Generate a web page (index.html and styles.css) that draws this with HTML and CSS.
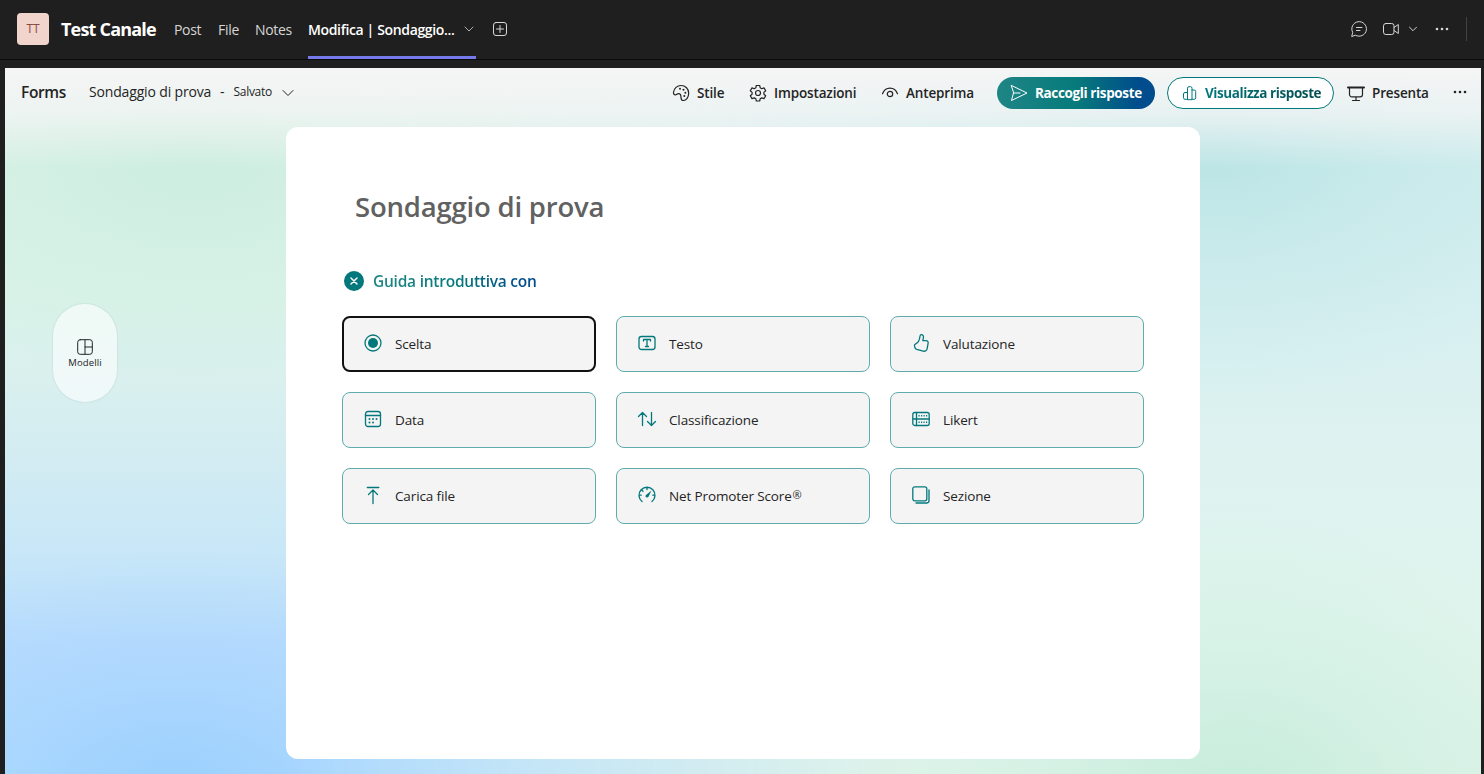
FILE: index.html
```html
<!DOCTYPE html>
<html lang="it">
<head>
    <meta charset="UTF-8">
    <meta name="viewport" content="width=device-width, initial-scale=1.0">
    <title>Test Canale</title>
    <link rel="stylesheet" href="styles.css">
</head>
<body>
    <header class="topbar">
        <div class="avatar">TT</div>
        <h1 class="channel">Test Canale</h1>
        <nav class="tabs">
            <a class="tab post">Post</a>
            <a class="tab file">File</a>
            <a class="tab notes">Notes</a>
            <a class="tab active">
                <span>Modifica | Sondaggio...</span>
                <svg width="10" height="10" viewBox="0 0 10 10"><path d="M1 3l4 4 4-4"/></svg>
            </a>
        </nav>
        <svg class="add" width="16" height="16" viewBox="0 0 16 16"><rect x="1.5" y="1.5" width="13" height="13" rx="2.5"/><path d="M8 4.500v7M4.500 8h7"/></svg>
        <div class="top-actions">
            <svg class="chat" width="18" height="18" viewBox="0 0 18 18"><path d="M1.800 16.200l.9-3.800A7.300 7.300 0 1 1 5.700 15.400zM6.500 7.500h5.500M6.500 10.500h3.500"/></svg>
            <svg class="video" width="18" height="16" viewBox="0 0 18 16"><rect x="1.500" y="2.500" width="10.500" height="11" rx="2.300"/><path d="M12 6.500l4.300-3v9l-4.300-3"/></svg>
            <svg class="video-menu" width="10" height="10" viewBox="0 0 10 10"><path d="M1.500 3.200l3.500 3.500 3.500-3.500"/></svg>
            <svg class="dots" width="14" height="4" viewBox="0 0 14 4"><circle cx="2" cy="2" r="1.300"/><circle cx="7" cy="2" r="1.300"/><circle cx="12" cy="2" r="1.300"/></svg>
            <span class="divider"></span>
        </div>
    </header>

    <main class="page">
        <div class="forms-bar">
            <span class="brand">Forms</span>
            <span class="doc-name">Sondaggio di prova</span>
            <span class="dash">-</span>
            <span class="saved">Salvato</span>
            <svg class="saved-menu" width="12" height="12" viewBox="0 0 12 12"><path d="M1 3.500l5 5 5-5"/></svg>
            <div class="commands">
                <a class="command style">
                    <svg width="18" height="18" viewBox="0 0 18 18"><path d="M1.500 8.200C2 4.200 5.200 1.500 9 1.500c4.500 0 7.700 3.400 7.700 7.600 0 4-2.400 7.400-5.200 7.400-1.800 0-2.500-1.300-2.500-3.100 0-2.300-.7-3.800-2.500-3.800-1.600 0-1.700 1.300-3.200 1.300-1.200 0-2-1.100-1.800-2.700z"/><g class="fill"><circle cx="8" cy="4.700" r="1"/><circle cx="11.500" cy="5.800" r="1"/><circle cx="13.400" cy="8.700" r="1"/><circle cx="12.300" cy="12" r="1"/></g></svg>
                    <span>Stile</span>
                </a>
                <a class="command settings">
                    <svg width="18" height="18" viewBox="0 0 18 18"><path d="M7.300 1.500h3.400l.5 2.300 1.500.9 2.300-.8 1.700 2.900-1.800 1.600v1.800l1.800 1.500-1.700 2.900-2.300-.7-1.500.8-.5 2.300H7.300l-.5-2.300-1.500-.8-2.300.7-1.700-2.900 1.800-1.500V8.400L1.300 6.800 3 3.900l2.300.8 1.500-.9z"/><circle cx="9" cy="9" r="2.500"/></svg>
                    <span>Impostazioni</span>
                </a>
                <a class="command preview">
                    <svg width="18" height="18" viewBox="0 0 18 18"><path d="M1.500 9.800C2.800 6.200 5.600 4.100 9 4.100s6.200 2.100 7.500 5.700"/><circle cx="9" cy="10" r="2.700"/></svg>
                    <span>Anteprima</span>
                </a>
                <button class="btn collect">
                    <svg width="18" height="18" viewBox="0 0 18 18"><path d="M1.500 1.500L17 9 1.500 16.500 3.500 9zM3.500 9H10"/></svg>
                    <span>Raccogli risposte</span>
                </button>
                <button class="btn results">
                    <svg width="16" height="16" viewBox="0 0 16 16"><path d="M5.500 14.300V3.200a1.500 1.500 0 0 1 1.500-1.500h1.500A1.500 1.500 0 0 1 10 3.200v11.100zM5.500 7.500H3A1.500 1.500 0 0 0 1.500 9v3.800A1.500 1.500 0 0 0 3 14.300h2.500M10 5h2.200a1.500 1.500 0 0 1 1.500 1.500v6.300a1.500 1.500 0 0 1-1.500 1.500H10"/></svg>
                    <span>Visualizza risposte</span>
                </button>
                <a class="command present">
                    <svg width="18" height="18" viewBox="0 0 18 18"><path class="thick" d="M1 2.500h16"/><path d="M2.500 3v6.500a2.300 2.300 0 0 0 2.300 2.300h8.400a2.300 2.300 0 0 0 2.300-2.300V3M9 12v3.500M5.500 15.500h7"/></svg>
                    <span>Presenta</span>
                </a>
                <svg class="dots more" width="14" height="4" viewBox="0 0 14 4"><circle cx="2" cy="2" r="1.300"/><circle cx="7" cy="2" r="1.300"/><circle cx="12" cy="2" r="1.300"/></svg>
            </div>
        </div>

        <div class="workspace">
            <a class="templates">
                <svg width="16" height="16" viewBox="0 0 16 16"><rect x=".7" y=".7" width="14.600" height="14.600" rx="2.500"/><path d="M8 1v14M8 8h7"/></svg>
                <span>Modelli</span>
            </a>
            <section class="form-card">
                <h2 class="title">Sondaggio di prova</h2>
                <div class="guide">
                    <svg width="20" height="20" viewBox="0 0 20 20"><circle cx="10" cy="10" r="10"/><path d="M7 7l6 6M13 7l-6 6"/></svg>
                    <span>Guida introduttiva con</span>
                </div>
                <div class="types">
                    <button class="type selected">
                        <svg width="20" height="20" viewBox="0 0 20 20"><circle cx="10" cy="10" r="8"/><circle class="fill" cx="10" cy="10" r="5"/></svg>
                        <span>Scelta</span>
                    </button>
                    <button class="type">
                        <svg width="20" height="20" viewBox="0 0 20 20"><rect x="2" y="3.500" width="16" height="13" rx="2.500"/><path d="M6.500 8V6.500h7V8M10 6.500v7M8.500 13.500h3"/></svg>
                        <span>Testo</span>
                    </button>
                    <button class="type">
                        <svg width="20" height="20" viewBox="0 0 20 20"><path d="M10.300 1.600c1.700 0 2.500 1.500 2.100 3.300l-.6 2.800h3.300c1.400 0 2.300 1.200 2 2.600l-.9 5.100c-.4 2.200-2 3.200-4.100 2.700l-6.300-1.700c-1-.3-1.500-.8-1.800-1.700l-.5-1.500c-.3-1 .2-1.900 1.200-2.300C7.300 9.800 8.600 7 9 3.300c.1-1 .4-1.700 1.300-1.700z"/></svg>
                        <span>Valutazione</span>
                    </button>
                    <button class="type">
                        <svg width="20" height="20" viewBox="0 0 20 20"><rect x="2.500" y="2.500" width="15" height="15" rx="2.500"/><path d="M2.500 6.500h15"/><g class="fill"><circle cx="6.500" cy="10" r="1"/><circle cx="10" cy="10" r="1"/><circle cx="13.500" cy="10" r="1"/><circle cx="6.500" cy="13.500" r="1"/><circle cx="10" cy="13.500" r="1"/></g></svg>
                        <span>Data</span>
                    </button>
                    <button class="type">
                        <svg width="20" height="20" viewBox="0 0 20 20"><path d="M5.500 16.500v-13M1.500 7.500l4-4 4 4M14.500 3.500v13M10.500 12.500l4 4 4-4"/></svg>
                        <span>Classificazione</span>
                    </button>
                    <button class="type">
                        <svg width="20" height="20" viewBox="0 0 20 20"><rect x="1.800" y="3.500" width="16.400" height="13" rx="2"/><path d="M5.500 3.500v13M2 10h16"/><path class="dotted" d="M7.500 6.800h9.500M7.500 13.200h9.500"/></svg>
                        <span>Likert</span>
                    </button>
                    <button class="type">
                        <svg width="20" height="20" viewBox="0 0 20 20"><path d="M4.300 2.500h11.500M10 18.500V5M5.500 9.500L10 5l4.500 4.500"/></svg>
                        <span>Carica file</span>
                    </button>
                    <button class="type">
                        <svg width="20" height="20" viewBox="0 0 20 20"><path d="M5 16.500a8 8 0 1 1 10 0M10 2.500v2M4.500 4.800L6 6.200M2.200 10.200h2M15.800 10.200h2"/><path class="fill" d="M14.500 5.500l-3 6.200c-.6 1.100-2.400 1.100-2.900 0-.3-.7-.1-1.300.4-1.800z"/></svg>
                        <span>Net Promoter Score<span class="reg">®</span></span>
                    </button>
                    <button class="type">
                        <svg width="20" height="20" viewBox="0 0 20 20"><rect x="1.800" y="1.800" width="14" height="14" rx="2"/><path d="M18 5v10.500a2.500 2.500 0 0 1-2.500 2.500H5"/></svg>
                        <span>Sezione</span>
                    </button>
                </div>
            </section>
        </div>
    </main>
</body>
</html>
```

FILE: styles.css
```css
* {
    box-sizing: border-box;
}

body {
    margin: 0;
    height: 774px;
    overflow: hidden;
    background-color: #1f1f1f;
    font-family: "Open Sans", "Noto Sans", sans-serif;
    font-size: 14px;
    color: #242424;
}

svg {
    flex: none;
    fill: none;
    stroke: currentColor;
    stroke-linecap: round;
    stroke-linejoin: round;
}

svg .fill,
.dots {
    fill: currentColor;
    stroke: none;
}

button {
    font-family: inherit;
    font-size: 14px;
    cursor: pointer;
}

span {
    white-space: nowrap;
}

/* Teams channel bar */
.topbar {
    display: flex;
    align-items: center;
    height: 60px;
    padding: 0 17px;
    border-bottom: 1px solid #0a0a0a;
    color: #d6d6d6;
}

.avatar {
    width: 32px;
    height: 32px;
    margin-top: -1px;
    border-radius: 4px;
    background-color: #f1d5cd;
    color: #8a4a40;
    font-size: 12px;
    line-height: 32px;
    text-align: center;
}

.channel {
    margin: -2px 0 0 12px;
    width: 95px;
    color: #fff;
    font-size: 18px;
    font-weight: 700;
    letter-spacing: -0.8px;
    white-space: nowrap;
}

.tabs {
    display: flex;
    margin-left: 18px;
    gap: 17px;
}

.tab {
    display: flex;
    align-items: center;
    height: 59px;
    padding-bottom: 1px;
    letter-spacing: -0.3px;
}

.post {
    width: 27px;
}

.file {
    width: 20px;
}

.notes {
    width: 36px;
}

.active {
    width: 168px;
    justify-content: space-between;
    padding: 2px 2px 0 0;
    border-bottom: 3px solid #7579eb;
    color: #fff;
    font-weight: 600;
    letter-spacing: -0.35px;
}

.active svg {
    color: #adadad;
}

.add {
    margin-left: 16px;
    margin-top: -1px;
}

.top-actions {
    display: flex;
    align-items: center;
    margin-left: auto;
    margin-top: -1px;
}

.video {
    margin-left: 14px;
}

.video-menu {
    margin-left: 8px;
}

.topbar .dots {
    margin-left: 17px;
}

.divider {
    width: 1px;
    height: 24px;
    margin-left: 17px;
    background-color: #424242;
}

/* Forms page */
.page {
    position: relative;
    margin: 8px 3px 0 5px;
    height: 706px;
    background:
        radial-gradient(380px 260px at 1210px 80px, rgba(176, 224, 224, 0.65), rgba(176, 224, 224, 0.25) 50%, transparent),
        radial-gradient(400px 300px at 1230px 730px, rgba(192, 235, 216, 0.8), rgba(192, 235, 216, 0.3) 50%, transparent),
        linear-gradient(#cdebec 0, #d2eeef 120px, #d9f0f1 270px, #def3f0 400px, #e1f5ee 550px, #e0f4ea 706px);
}

.page::before {
    content: "";
    position: absolute;
    inset: 0;
    background:
        radial-gradient(380px 220px at 190px 95px, rgba(196, 235, 219, 0.6), rgba(196, 235, 219, 0.25) 50%, transparent),
        radial-gradient(380px 230px at 170px 716px, rgba(146, 203, 253, 0.7), rgba(146, 203, 253, 0.25) 50%, transparent),
        linear-gradient(#d9f2e7 0, #d9f2e7 120px, #dbf3e9 225px, #d9f0ee 310px, #d3ecf2 390px, #c8e7f7 480px, #b9dcfe 580px, #b3dcff 706px);
    -webkit-mask-image: linear-gradient(90deg, #000 290px, transparent 900px);
    mask-image: linear-gradient(90deg, #000 290px, transparent 900px);
}

/* soft fade under the command bar */
.page::after {
    content: "";
    position: absolute;
    inset: 0 0 auto;
    height: 100px;
    background: linear-gradient(#f5f5f5 0, rgba(245, 245, 245, 0.75) 45px, rgba(245, 245, 245, 0) 100px);
}

.forms-bar,
.workspace {
    position: relative;
    z-index: 1;
    display: flex;
}

.forms-bar {
    align-items: center;
    height: 50px;
    padding: 0 14px 0 16px;
}

.forms-bar > span {
    margin-top: -3px;
}

.brand {
    width: 45px;
    font-size: 15.5px;
    font-weight: 600;
    letter-spacing: -0.35px;
}

.doc-name {
    width: 122px;
    margin-left: 23px;
    letter-spacing: -0.16px;
}

.dash {
    margin-left: 9px;
}

.saved {
    width: 39px;
    margin-left: 9px;
    font-size: 12px;
    letter-spacing: -0.3px;
}

.saved-menu {
    margin-left: 9px;
}

.commands {
    display: flex;
    align-items: center;
    margin-left: auto;
}

.command {
    display: flex;
    align-items: center;
    gap: 7px;
    font-size: 13.5px;
    font-weight: 600;
    letter-spacing: -0.15px;
}

.command span,
.btn span {
    margin-top: -1px;
}

.command svg {
    stroke-width: 1.2;
}

.command .thick {
    stroke-width: 2;
}

.style {
    width: 77px;
}

.settings {
    width: 132px;
}

.preview {
    width: 116px;
}

.btn {
    display: flex;
    align-items: center;
    height: 32px;
    padding: 0;
    border-radius: 16px;
    font-size: 13.5px;
    font-weight: 700;
    letter-spacing: -0.37px;
}

.collect {
    width: 158px;
    gap: 7px;
    padding-left: 13px;
    border: none;
    background: linear-gradient(90deg, #1f8585 0, #077a7b 50%, #004c8c 90%);
    color: #fff;
}

.results {
    width: 167px;
    margin-left: 12px;
    padding-left: 14px;
    gap: 7px;
    border: 1px solid #03787c;
    background-color: #fff;
    color: #03787c;
    letter-spacing: -0.42px;
}

.results span {
    background: linear-gradient(90deg, #03787c, #024b50);
    -webkit-background-clip: text;
    background-clip: text;
    color: transparent;
}

.present {
    width: 106px;
    margin-left: 13px;
}

.present svg {
    margin-top: 2px;
}

.more {
    margin-top: -2px;
}

.templates {
    display: flex;
    flex-direction: column;
    align-items: center;
    justify-content: center;
    width: 64px;
    height: 98px;
    margin: 186px 0 0 48px;
    padding-top: 2px;
    border-radius: 32px;
    background-color: rgba(255, 255, 255, 0.6);
    box-shadow: 0 0 2px rgba(0, 0, 0, 0.15);
    font-size: 9.5px;
    line-height: 14px;
    letter-spacing: 0.1px;
}

.templates span {
    margin-top: 1px;
}

.form-card {
    width: 914px;
    height: 632px;
    margin: 9px 0 0 169px;
    padding: 59px 56px 0;
    border-radius: 12px;
    background-color: #fff;
}

.title {
    margin: 0 0 0 13px;
    color: #616161;
    font-size: 27.5px;
    font-weight: 600;
    line-height: 42px;
    letter-spacing: -0.2px;
}

.guide {
    display: flex;
    align-items: center;
    height: 24px;
    gap: 9px;
    margin: 41px 0 23px 2px;
    font-size: 15.5px;
    font-weight: 600;
    letter-spacing: -0.24px;
}

.guide circle {
    fill: #03787c;
    stroke: none;
}

.guide path {
    stroke: #fff;
    stroke-width: 1.5;
}

.guide span {
    margin-top: -1px;
    background: linear-gradient(90deg, #1f8585 0, #077a7b 50%, #004c8c 90%);
    -webkit-background-clip: text;
    background-clip: text;
    color: transparent;
}

.types {
    display: grid;
    grid-template-columns: repeat(3, 254px);
    grid-auto-rows: 56px;
    gap: 20px;
}

.type {
    display: flex;
    align-items: center;
    gap: 12px;
    padding: 0 20px;
    border: 1px solid #60acac;
    border-radius: 8px;
    background-color: #f4f4f4;
    color: #242424;
    font-size: 13.5px;
    letter-spacing: -0.13px;
}

.type.selected {
    padding: 0 19px;
    border: 2px solid #111;
}

.type > span {
    margin-top: -1px;
}

.reg {
    margin-left: 1px;
    font-size: 11px;
    vertical-align: 2px;
    line-height: 1;
}

.type svg {
    margin-top: -2px;
    color: #03787c;
    stroke-width: 1.3;
}

.type .dotted {
    stroke-dasharray: 1.2 1.3;
    stroke-linecap: butt;
    stroke-width: 1.5;
}
```
